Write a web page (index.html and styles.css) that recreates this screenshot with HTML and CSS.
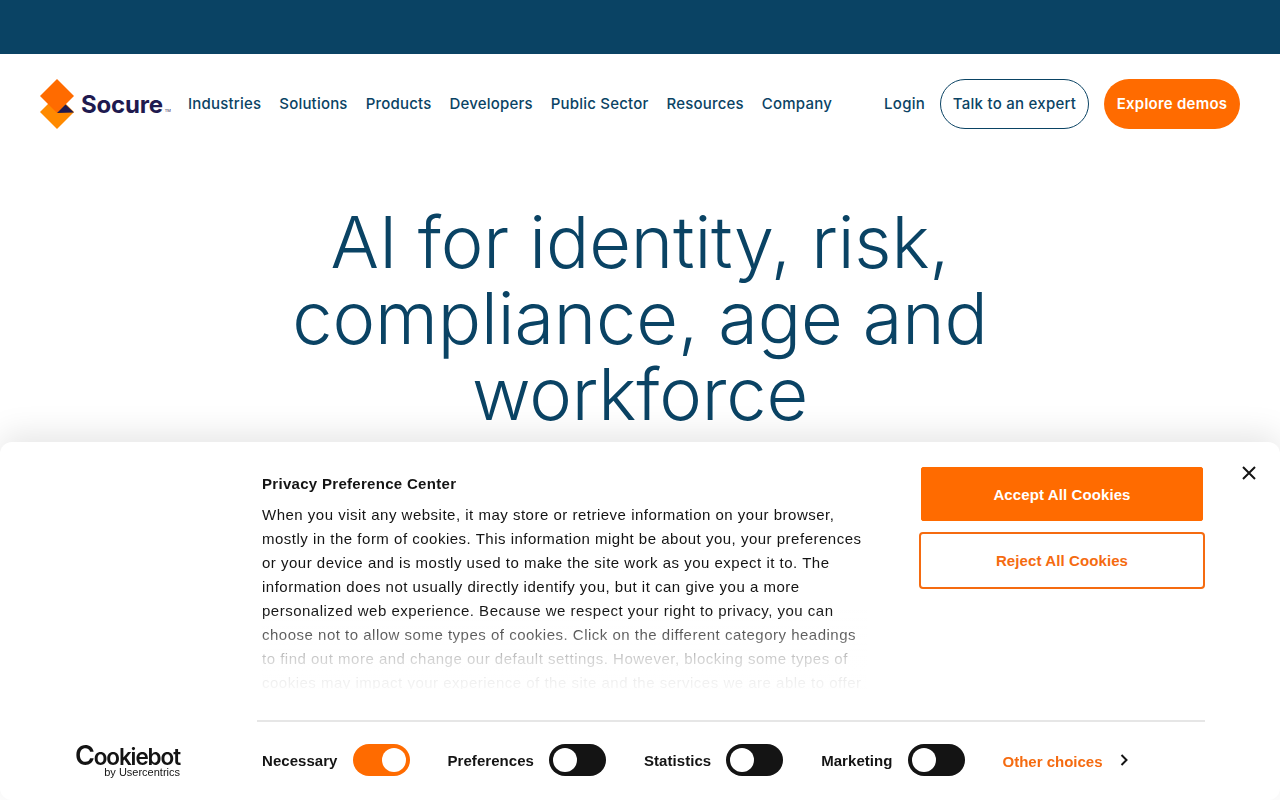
FILE: index.html
```html
<!DOCTYPE html>
<html lang="en">
<head>
<meta charset="utf-8">
<title>Socure</title>
<link rel="stylesheet" href="styles.css">
</head>
<body>
<div class="topbar"></div>
<header class="nav">
  <a class="brand" href="#">
    <svg class="brand-mark" width="34" height="50" viewBox="0 0 34 50">
      <polygon points="17,16 34,33 17,50 0,33" fill="#ff8a00"/>
      <polygon points="17,0 34,17 17,34 0,17" fill="#ff6b00"/>
      <polygon points="17,34 25.500,25.500 34,33.500" fill="#1f1a4f"/>
    </svg>
    <span class="brand-name">Socure</span><span class="brand-tm">TM</span>
  </a>
  <nav class="links">
    <a href="#">Industries</a><a href="#">Solutions</a><a href="#">Products</a><a href="#">Developers</a><a href="#">Public Sector</a><a href="#">Resources</a><a href="#">Company</a>
  </nav>
  <div class="actions">
    <a class="login" href="#">Login</a>
    <a class="pill pill-outline" href="#">Talk to an expert</a>
    <a class="pill pill-solid" href="#">Explore demos</a>
  </div>
</header>
<main class="hero">
  <h1>AI for identity, risk, compliance, age and workforce</h1>
</main>
<section class="cookie">
  <div class="cookie-top">
    <div class="cookie-text">
      <h2>Privacy Preference Center</h2>
      <p>When you visit any website, it may store or retrieve information on your browser, mostly in the form of cookies. This information might be about you, your preferences or your device and is mostly used to make the site work as you expect it to. The information does not usually directly identify you, but it can give you a more personalized web experience. Because we respect your right to privacy, you can choose not to allow some types of cookies. Click on the different category headings to find out more and change our default settings. However, blocking some types of cookies may impact your experience of the site and the services we are able to offer</p>
      <div class="fade"></div>
    </div>
    <div class="cookie-buttons">
      <button class="btn btn-accept">Accept All Cookies</button>
      <button class="btn btn-reject">Reject All Cookies</button>
    </div>
    <svg class="close" width="14" height="14" viewBox="0 0 14 14"><path d="M1 1 L13 13 M13 1 L1 13" stroke="#141414" stroke-width="2" fill="none"/></svg>
  </div>
  <div class="cookie-bottom">
    <div class="cb-logo">
      <span class="cb-name"><b class="cb-c">C</b>ookiebot</span>
      <span class="cb-by">by Usercentrics</span>
    </div>
    <div class="cookie-controls">
      <div class="toggles">
        <div class="toggle-row"><span>Necessary</span><i class="switch switch-on"></i></div>
        <div class="toggle-row"><span>Preferences</span><i class="switch"></i></div>
        <div class="toggle-row"><span>Statistics</span><i class="switch"></i></div>
        <div class="toggle-row"><span>Marketing</span><i class="switch"></i></div>
        <a class="other" href="#"><span>Other choices</span>
          <svg width="8" height="12" viewBox="0 0 8 12"><path d="M1.500 1 L6.500 6 L1.500 11" stroke="#141414" stroke-width="2" fill="none"/></svg>
        </a>
      </div>
    </div>
  </div>
</section>
</body>
</html>
```
FILE: styles.css
```css
* { box-sizing: border-box; }
html, body { margin: 0; height: 800px; overflow: hidden; background: #fff; }
body { font-family: "Inter", "Liberation Sans", sans-serif; color: #0a4364; }
a { text-decoration: none; color: inherit; }

.topbar { height: 54px; background: #0a4364; }

.nav { height: 100px; padding: 0 40px; display: flex; align-items: center; }
.brand { display: flex; align-items: center; width: 148px; color: #1f1a4f; }
.brand-mark { flex: none; }
.brand-name { margin-left: 7px; font-size: 24px; font-weight: 700; letter-spacing: -0.2px; }
.brand-tm { font-size: 4px; margin: 12px 0 0 2px; }
.links { display: flex; gap: 18px; padding-bottom: 2px; font-size: 15px; font-weight: 500; letter-spacing: .2px; }
.actions { margin-left: auto; display: flex; align-items: center; font-size: 15px; font-weight: 500; letter-spacing: .25px; }
.login { margin-right: 15px; padding-bottom: 2px; }
.pill { height: 50px; padding-bottom: 2px; border-radius: 25px; display: flex; align-items: center; justify-content: center; }
.pill-outline { width: 149px; border: 1px solid #0a4364; margin-right: 15px; }
.pill-solid { width: 136px; background: #ff6b00; color: #fff; font-weight: 600; }

.hero { padding-top: 50px; display: flex; justify-content: center; }
h1 { margin: 0; width: 760px; text-align: center; font-size: 72px; line-height: 76px; font-weight: 350; letter-spacing: -.1px; color: #0a4364; }

.cookie { position: fixed; left: 0; right: 0; bottom: 0; height: 358px; background: #fff; border-radius: 12px; box-shadow: 0 -8px 32px rgba(0,0,0,.1); font-family: "Liberation Sans", Arial, sans-serif; color: #141414; display: flex; flex-direction: column; }
.cookie-top { position: relative; height: 278px; padding: 0 75px 0 262px; display: flex; justify-content: space-between; }
.cookie-text { position: relative; margin-top: 32px; width: 605px; height: 221px; }
h2 { margin: 0 0 9px; font-size: 15px; line-height: 20px; font-weight: 700; letter-spacing: .3px; }
.cookie-text p { margin: 0; font-size: 15px; line-height: 24px; letter-spacing: .5px; }
.fade { position: absolute; left: 0; right: 0; bottom: 0; height: 85px; background: linear-gradient(to bottom, rgba(255,255,255,0) 0%, rgba(255,255,255,.3) 29%, rgba(255,255,255,.8) 58%, rgba(255,255,255,.94) 86%, rgba(255,255,255,.96) 93%, #fff 93%); }
.cookie-buttons { margin-top: 25px; display: flex; flex-direction: column; gap: 11px; width: 286px; }
.btn { font: 700 15px "Liberation Sans", Arial, sans-serif; letter-spacing: .1px; border-radius: 2px; cursor: pointer; }
.btn-accept { height: 54px; margin: 0 2px; background: #ff6b00; color: #fff; border: 1px solid #ff6b00; }
.btn-reject { height: 57px; background: #fff; color: #f56b10; border: 2px solid #f56b10; border-radius: 4px; }
.close { position: absolute; top: 24px; right: 24px; }

.cookie-bottom { flex: 1; display: flex; }
.cb-logo { width: 257px; padding: 2px 77px 0 60px; display: flex; flex-direction: column; align-items: flex-end; justify-content: center; color: #141414; }
.cb-name { font-family: "Inter", sans-serif; font-size: 22.500px; line-height: 20px; font-weight: 600; letter-spacing: -1.1px; white-space: nowrap; }
.cb-c { font-size: 27px; line-height: 20px; font-weight: 600; }
.cb-by { font-size: 11px; line-height: 10px; white-space: nowrap; }
.cookie-controls { flex: none; width: 948px; border-top: 2px solid #e6e6e6; padding-left: 5px; }
.toggles { display: flex; align-items: center; height: 76px; }
.toggle-row { display: flex; align-items: center; gap: 15px; margin-right: 38px; font-size: 15px; font-weight: 700; letter-spacing: .05px; }
.switch { position: relative; display: block; width: 57px; height: 32px; border-radius: 16px; background: #141414; }
.switch::after { content: ""; position: absolute; top: 4px; left: 4px; width: 24px; height: 24px; border-radius: 50%; background: #fff; }
.switch-on { background: #ff6b00; }
.switch-on::after { left: 29px; }
.other { display: flex; align-items: center; gap: 17px; padding-top: 2px; font-size: 15px; font-weight: 700; color: #f56b10; }
.other svg { flex: none; margin-top: -2px; }
```
